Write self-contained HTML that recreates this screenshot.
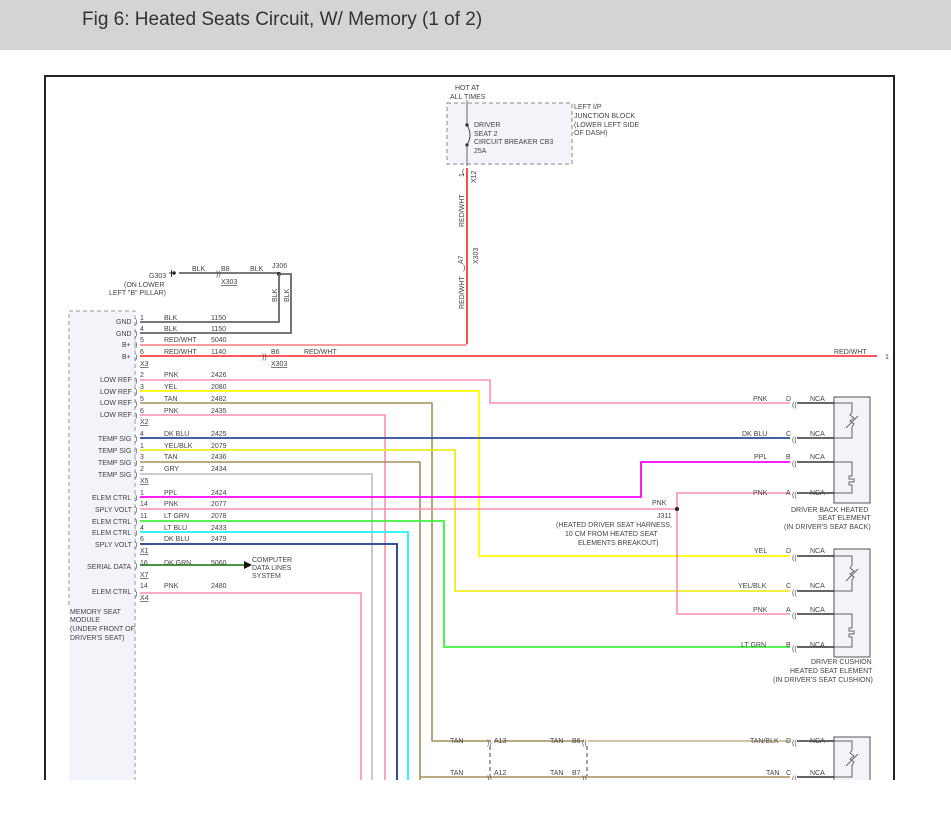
<!DOCTYPE html>
<html><head><meta charset="utf-8"><style>
html,body{margin:0;padding:0;background:#fff;width:951px;height:813px;overflow:hidden}
.hdr{position:absolute;left:0;top:0;width:951px;height:50px;background:#d4d4d4}
.hdr span{position:absolute;left:82px;top:9px;font-family:"Liberation Sans",sans-serif;font-size:19px;color:#333;}
svg{position:absolute;left:0;top:0}
text{font-family:"Liberation Sans",sans-serif;font-size:7px;fill:#444}
</style></head><body>
<div class="hdr"><span>Fig 6: Heated Seats Circuit, W/ Memory (1 of 2)</span></div>
<svg width="951" height="813" viewBox="0 0 951 813">
<!-- frame -->
<rect x="45" y="76" width="849" height="740" fill="none" stroke="#222" stroke-width="2"/>

<!-- junction block -->
<rect x="447" y="103" width="125" height="61" fill="#f3f3fa" stroke="#888" stroke-dasharray="4,3"/>
<text x="455" y="90">HOT AT</text><text x="450" y="99">ALL TIMES</text>
<text x="474" y="127">DRIVER</text><text x="474" y="136">SEAT 2</text>
<text x="474" y="144">CIRCUIT BREAKER CB3</text><text x="474" y="153">25A</text>
<text x="574" y="109">LEFT I/P</text><text x="574" y="118">JUNCTION BLOCK</text>
<text x="574" y="127">(LOWER LEFT SIDE</text><text x="574" y="135">OF DASH)</text>
<line x1="467" y1="100" x2="467" y2="124" stroke="#666"/>
<circle cx="467" cy="125" r="1.6" fill="#222"/><circle cx="467" cy="145" r="1.6" fill="#222"/>
<path d="M467 125 Q473 135 467 145" fill="none" stroke="#444"/>
<line x1="467" y1="145" x2="467" y2="166" stroke="#666"/>
<line x1="467" y1="168" x2="467" y2="344" stroke="#ff2020" stroke-width="1.6"/>
<text transform="translate(464,177) rotate(-90)">1</text>
<text transform="translate(476,183) rotate(-90)">X12</text>
<text transform="translate(464,227) rotate(-90)">RED/WHT</text>
<text transform="translate(463,264) rotate(-90)">A7</text>
<text transform="translate(478,264) rotate(-90)">X303</text>
<text transform="translate(464,309) rotate(-90)">RED/WHT</text>
<text x="462" y="174" font-size="8">(</text><text x="463" y="270" font-size="8">)</text>

<!-- G303 / J306 -->
<text x="149" y="278">G303</text>
<line x1="169" y1="273" x2="171" y2="273" stroke="#333"/>
<rect x="171" y="270" width="1" height="7" fill="#333"/>
<circle cx="174" cy="273" r="1.8" fill="#222"/>
<line x1="179" y1="273" x2="279" y2="273" stroke="#666" stroke-width="1.8"/>
<text x="192" y="271">BLK</text><text x="221" y="271">B8</text><text x="250" y="271">BLK</text>
<text x="221" y="284" text-decoration="underline">X303</text>
<text x="216" y="276" font-size="8">))</text>
<text x="272" y="268">J306</text>
<circle cx="279" cy="274" r="2" fill="#222"/>
<text x="124" y="287">(ON LOWER</text><text x="109" y="295">LEFT "B" PILLAR)</text>
<text transform="translate(277,302) rotate(-90)">BLK</text>
<text transform="translate(289,302) rotate(-90)">BLK</text>
<path d="M279 274 V322 H140" fill="none" stroke="#666" stroke-width="1.8"/>
<path d="M279 274 H291 V333 H140" fill="none" stroke="#666" stroke-width="1.8"/>

<!-- module box -->
<rect x="69" y="311" width="66" height="480" fill="#f3f3fa"/>
<path d="M69 605 V311 H135 V790" fill="none" stroke="#999" stroke-dasharray="4,3"/>
<text x="70" y="614">MEMORY SEAT</text><text x="70" y="622">MODULE</text>
<text x="70" y="631">(UNDER FRONT OF</text><text x="70" y="640">DRIVER'S SEAT)</text>

<!-- wires -->
<g fill="none" stroke-width="1.6">
<line x1="140" y1="345" x2="467" y2="345" stroke="#ff7a7a"/>
<line x1="140" y1="356" x2="877" y2="356" stroke="#ff2020"/>
<path d="M140 380 H490 V403 H790" stroke="#ff8fab"/>
<path d="M140 391 H479 V556 H790" stroke="#ffff00" stroke-width="1.8"/>
<path d="M140 403 H432 V741 H490" stroke="#a58e5c"/>
<path d="M140 415 H385 V780" stroke="#ff8fab"/>
<path d="M140 438 H790" stroke="#2c4a9c" stroke-width="1.8"/>
<path d="M140 450 H455 V591 H790" stroke="#ecec20" stroke-width="1.8"/>
<path d="M140 462 H420 V780" stroke="#a58e5c"/>
<path d="M140 474 H372 V780" stroke="#bdbdbd"/>
<path d="M140 497 H641 V462 H790" stroke="#ff00ff" stroke-width="1.8"/>
<path d="M140 509 H677" stroke="#ff8fab"/>
<path d="M677 509 V493 H790" stroke="#ff8fab"/>
<path d="M677 509 V614 H790" stroke="#ff8fab"/>
<path d="M140 521 H444 V647 H790" stroke="#3ef03e" stroke-width="1.8"/>
<path d="M140 532 H408 V780" stroke="#20f0f0" stroke-width="1.8"/>
<path d="M140 544 H397 V780" stroke="#1e3a8c" stroke-width="1.8"/>
<path d="M140 565 H244" stroke="#2e8a2e" stroke-width="1.8"/>
<path d="M140 593 H361 V780" stroke="#ff8fab"/>
<path d="M494 741 H584" stroke="#a58e5c"/>
<path d="M588 741 H790" stroke="#bfae88"/>
<path d="M420 777 H790" stroke="#a58e5c"/>
</g>
<polygon points="244,561 252,565 244,569" fill="#111"/>
<text x="252" y="562">COMPUTER</text><text x="252" y="570">DATA LINES</text><text x="252" y="578">SYSTEM</text>
<circle cx="677" cy="509" r="2" fill="#222"/>
<text x="652" y="505">PNK</text><text x="657" y="518">J311</text>
<text x="556" y="527">(HEATED DRIVER SEAT HARNESS,</text>
<text x="565" y="536">10 CM FROM HEATED SEAT</text>
<text x="578" y="545">ELEMENTS BREAKOUT)</text>

<g>
<text x="116" y="324">GND</text><text x="116" y="336">GND</text><text x="122" y="347">B+</text><text x="122" y="359">B+</text>
<text x="100" y="382">LOW REF</text><text x="100" y="394">LOW REF</text><text x="100" y="405">LOW REF</text><text x="100" y="417">LOW REF</text>
<text x="98" y="441">TEMP SIG</text><text x="98" y="453">TEMP SIG</text><text x="98" y="465">TEMP SIG</text><text x="98" y="477">TEMP SIG</text>
<text x="92" y="500">ELEM CTRL</text><text x="95" y="512">SPLY VOLT</text><text x="92" y="524">ELEM CTRL</text><text x="92" y="535">ELEM CTRL</text><text x="95" y="547">SPLY VOLT</text>
<text x="87" y="569">SERIAL DATA</text><text x="92" y="594">ELEM CTRL</text>
</g>
<g font-size="7">
<text x="140" y="320">1</text><text x="164" y="320">BLK</text><text x="211" y="320">1150</text>
<text x="140" y="331">4</text><text x="164" y="331">BLK</text><text x="211" y="331">1150</text>
<text x="140" y="342">5</text><text x="164" y="342">RED/WHT</text><text x="211" y="342">5040</text>
<text x="140" y="354">6</text><text x="164" y="354">RED/WHT</text><text x="211" y="354">1140</text>
<text x="140" y="366" text-decoration="underline">X3</text>
<text x="271" y="354">B6</text><text x="304" y="354">RED/WHT</text><text x="271" y="366" text-decoration="underline">X303</text>
<text x="262" y="359" font-size="8">))</text>
<text x="834" y="354">RED/WHT</text><text x="885" y="359">1</text>
<text x="140" y="377">2</text><text x="164" y="377">PNK</text><text x="211" y="377">2426</text>
<text x="140" y="389">3</text><text x="164" y="389">YEL</text><text x="211" y="389">2080</text>
<text x="140" y="401">5</text><text x="164" y="401">TAN</text><text x="211" y="401">2482</text>
<text x="140" y="413">6</text><text x="164" y="413">PNK</text><text x="211" y="413">2435</text>
<text x="140" y="424" text-decoration="underline">X2</text>
<text x="140" y="436">4</text><text x="164" y="436">DK BLU</text><text x="211" y="436">2425</text>
<text x="140" y="448">1</text><text x="164" y="448">YEL/BLK</text><text x="211" y="448">2079</text>
<text x="140" y="459">3</text><text x="164" y="459">TAN</text><text x="211" y="459">2436</text>
<text x="140" y="471">2</text><text x="164" y="471">GRY</text><text x="211" y="471">2434</text>
<text x="140" y="483" text-decoration="underline">X5</text>
<text x="140" y="495">1</text><text x="164" y="495">PPL</text><text x="211" y="495">2424</text>
<text x="140" y="506">14</text><text x="164" y="506">PNK</text><text x="211" y="506">2077</text>
<text x="140" y="518">11</text><text x="164" y="518">LT GRN</text><text x="211" y="518">2078</text>
<text x="140" y="530">4</text><text x="164" y="530">LT BLU</text><text x="211" y="530">2433</text>
<text x="140" y="541">6</text><text x="164" y="541">DK BLU</text><text x="211" y="541">2479</text>
<text x="140" y="553" text-decoration="underline">X1</text>
<text x="140" y="565">16</text><text x="164" y="565">DK GRN</text><text x="211" y="565">5060</text>
<text x="140" y="577" text-decoration="underline">X7</text>
<text x="140" y="588">14</text><text x="164" y="588">PNK</text><text x="211" y="588">2480</text>
<text x="140" y="600" text-decoration="underline">X4</text>
</g>
<g font-size="8" fill="#555">
<text x="135" y="324">)</text><text x="135" y="336">)</text><text x="135" y="347">)</text><text x="135" y="359">)</text>
<text x="135" y="383">)</text><text x="135" y="394">)</text><text x="135" y="406">)</text><text x="135" y="418">)</text>
<text x="135" y="441">)</text><text x="135" y="453">)</text><text x="135" y="465">)</text><text x="135" y="477">)</text>
<text x="135" y="500">)</text><text x="135" y="512">)</text><text x="135" y="524">)</text><text x="135" y="535">)</text><text x="135" y="547">)</text>
<text x="135" y="568">)</text><text x="135" y="596">)</text>
</g>

<g>
<rect x="834" y="397" width="36" height="106" fill="#f3f3fa" stroke="#555"/>
<rect x="834" y="549" width="36" height="108" fill="#f3f3fa" stroke="#555"/>
<rect x="834" y="737" width="36" height="50" fill="#f3f3fa" stroke="#555"/>
</g>
<g fill="none" stroke="#333" stroke-width="1.4">
<path d="M797 403 H834"/><path d="M797 438 H834"/><path d="M797 462 H834"/><path d="M797 493 H834"/>
<path d="M797 556 H834"/><path d="M797 591 H834"/><path d="M797 614 H834"/><path d="M797 647 H834"/>
<path d="M797 741 H834"/><path d="M797 777 H834"/>
</g>
<g fill="none" stroke="#666" stroke-width="1">
<path d="M834 403 H852 V412 l-2 3 4 3 -4 3 4 3 -2 3 V438 H834"/><path d="M846 428 l12 -12"/>
<path d="M834 462 H852 V476 h-3 v3 h5 v3 h-5 v3 h3 V493 H834"/>
<path d="M834 556 H852 V565 l-2 3 4 3 -4 3 4 3 -2 3 V591 H834"/><path d="M846 581 l12 -12"/>
<path d="M834 614 H852 V628 h-3 v3 h5 v3 h-5 v3 h3 V647 H834"/>
<path d="M834 741 H852 V750 l-2 3 4 3 -4 3 4 3 -2 3 V777 H834"/><path d="M846 766 l12 -12"/>
</g>
<g font-size="8" fill="#555">
<text x="792" y="407">((</text><text x="792" y="442">((</text><text x="792" y="466">((</text><text x="792" y="497">((</text>
<text x="792" y="560">((</text><text x="792" y="595">((</text><text x="792" y="618">((</text><text x="792" y="651">((</text>
<text x="792" y="745">((</text><text x="792" y="781">((</text>
<text x="487" y="745">))</text><text x="487" y="781">))</text><text x="582" y="745">((</text><text x="582" y="781">))</text>
</g>
<line x1="490" y1="746" x2="490" y2="776" stroke="#444" stroke-dasharray="4,3"/>
<line x1="587" y1="746" x2="587" y2="776" stroke="#444" stroke-dasharray="4,3"/>
<g>
<text x="753" y="401">PNK</text><text x="786" y="401">D</text><text x="810" y="401">NCA</text>
<text x="742" y="436">DK BLU</text><text x="786" y="436">C</text><text x="810" y="436">NCA</text>
<text x="754" y="459">PPL</text><text x="786" y="459">B</text><text x="810" y="459">NCA</text>
<text x="753" y="495">PNK</text><text x="786" y="495">A</text><text x="810" y="495">NCA</text>
<text x="791" y="512">DRIVER BACK HEATED</text><text x="818" y="520">SEAT ELEMENT</text>
<text x="784" y="529">(IN DRIVER'S SEAT BACK)</text>
<text x="754" y="553">YEL</text><text x="786" y="553">D</text><text x="810" y="553">NCA</text>
<text x="738" y="588">YEL/BLK</text><text x="786" y="588">C</text><text x="810" y="588">NCA</text>
<text x="753" y="612">PNK</text><text x="786" y="612">A</text><text x="810" y="612">NCA</text>
<text x="741" y="647">LT GRN</text><text x="786" y="647">B</text><text x="810" y="647">NCA</text>
<text x="811" y="664">DRIVER CUSHION</text><text x="790" y="673">HEATED SEAT ELEMENT</text>
<text x="773" y="682">(IN DRIVER'S SEAT CUSHION)</text>
<text x="450" y="743">TAN</text><text x="494" y="743">A13</text><text x="550" y="743">TAN</text><text x="572" y="743">B6</text>
<text x="750" y="743">TAN/BLK</text><text x="786" y="743">D</text><text x="810" y="743">NCA</text>
<text x="450" y="775">TAN</text><text x="494" y="775">A12</text><text x="550" y="775">TAN</text><text x="572" y="775">B7</text>
<text x="766" y="775">TAN</text><text x="786" y="775">C</text><text x="810" y="775">NCA</text>
</g>
<rect x="0" y="780" width="951" height="33" fill="#fff"/>
</svg>
</body></html>
